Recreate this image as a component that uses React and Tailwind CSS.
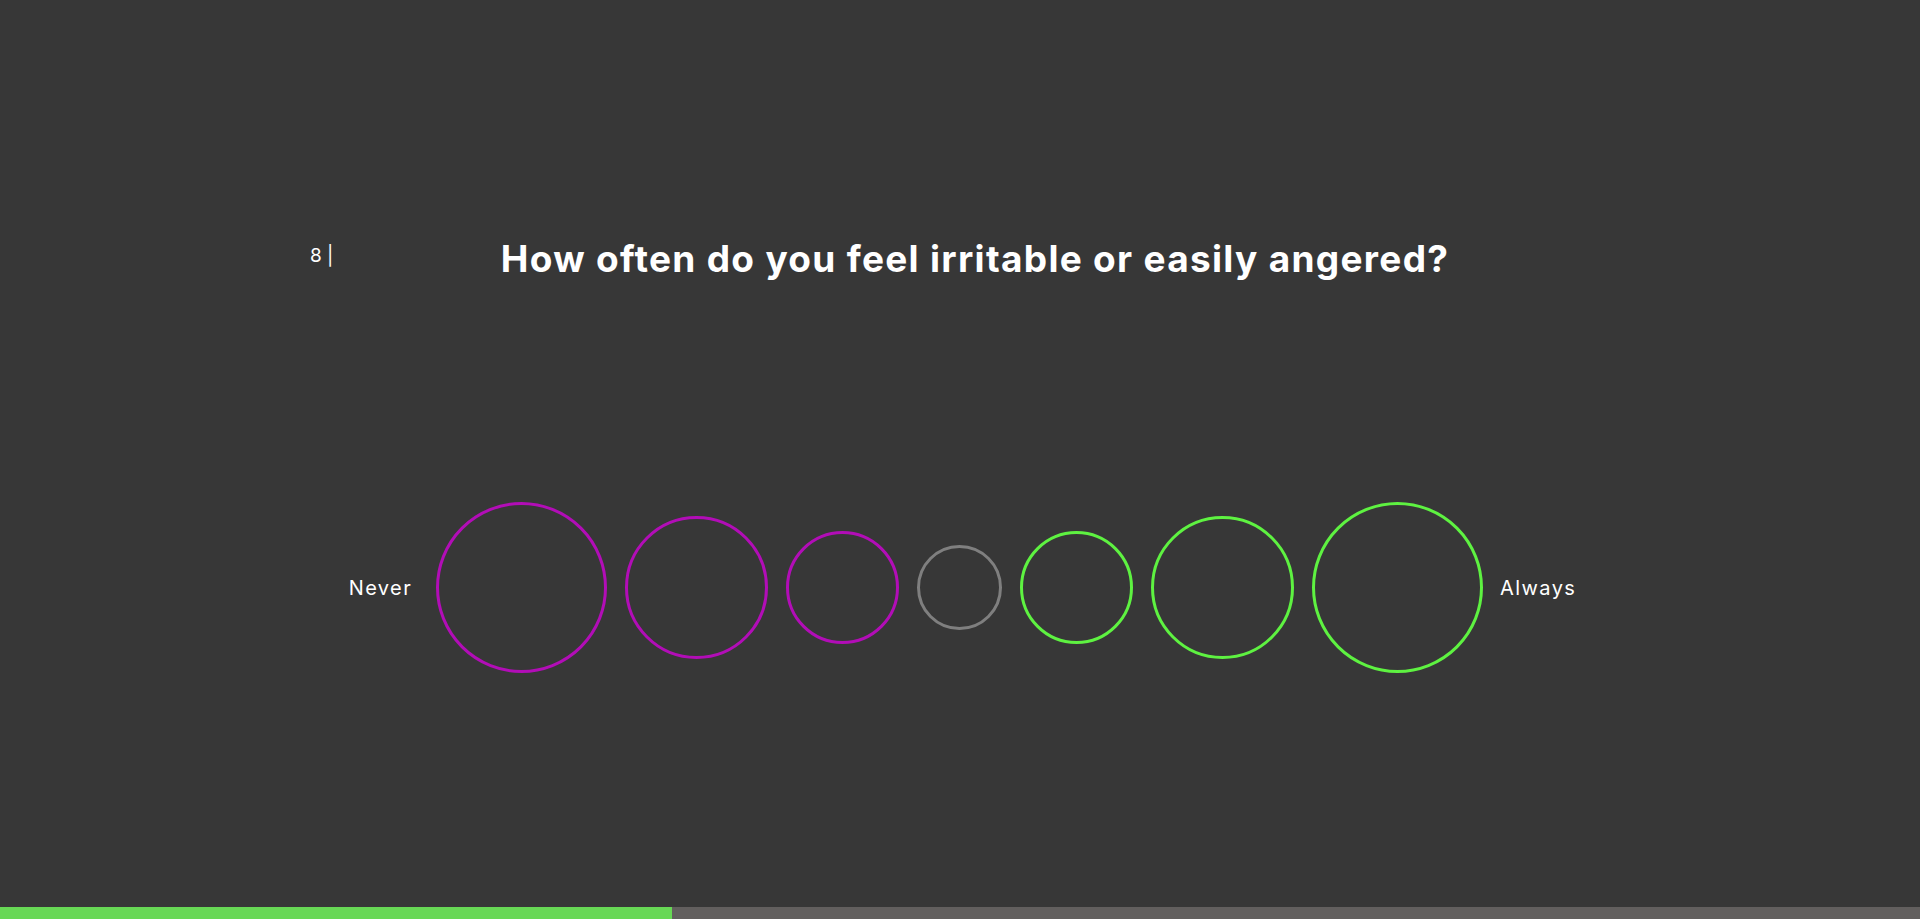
import React from "react";

const circles = [
  { d: 171, c: "border-[#b20db7]" },
  { d: 143, c: "border-[#b20db7]" },
  { d: 113, c: "border-[#b20db7]" },
  { d: 85, c: "border-[#7f7f7f]" },
  { d: 113, c: "border-[#5ef241]" },
  { d: 143, c: "border-[#5ef241]" },
  { d: 171, c: "border-[#5ef241]" },
];

export default function App() {
  return (
    <div
      className="flex h-[919px] w-full flex-col bg-[#373737] text-white"
      style={{ fontFamily: "Inter, 'Noto Sans', sans-serif" }}
    >
      <div className="flex flex-1 flex-col">
        <div className="mx-auto mt-[232px] flex w-[1300px] items-start">
          <div className="w-[30px] pt-[12px] text-[19px] leading-[24px] font-normal">8 |</div>
          <h1 className="flex-1 text-center text-[37px] leading-[54px] font-bold tracking-[1.3px]">
            How often do you feel irritable or easily angered?
          </h1>
        </div>
        <div className="mt-[216px] flex items-center justify-center pl-[5px]">
          <span className="mr-[24px] text-[20px] leading-[28px] tracking-[1.4px]">Never</span>
          <div className="flex items-center gap-[18px]">
            {circles.map((o, i) => (
              <button
                key={i}
                className={`rounded-full border-[3px] bg-transparent ${o.c}`}
                style={{ width: o.d, height: o.d }}
              />
            ))}
          </div>
          <span className="ml-[17px] text-[20px] leading-[28px] tracking-[1.4px]">Always</span>
        </div>
      </div>
      <div className="flex h-[12px] w-full">
        <div className="h-full w-[672px] bg-[#67d855]" />
        <div className="h-full flex-1 bg-[#625f5e]" />
      </div>
    </div>
  );
}
